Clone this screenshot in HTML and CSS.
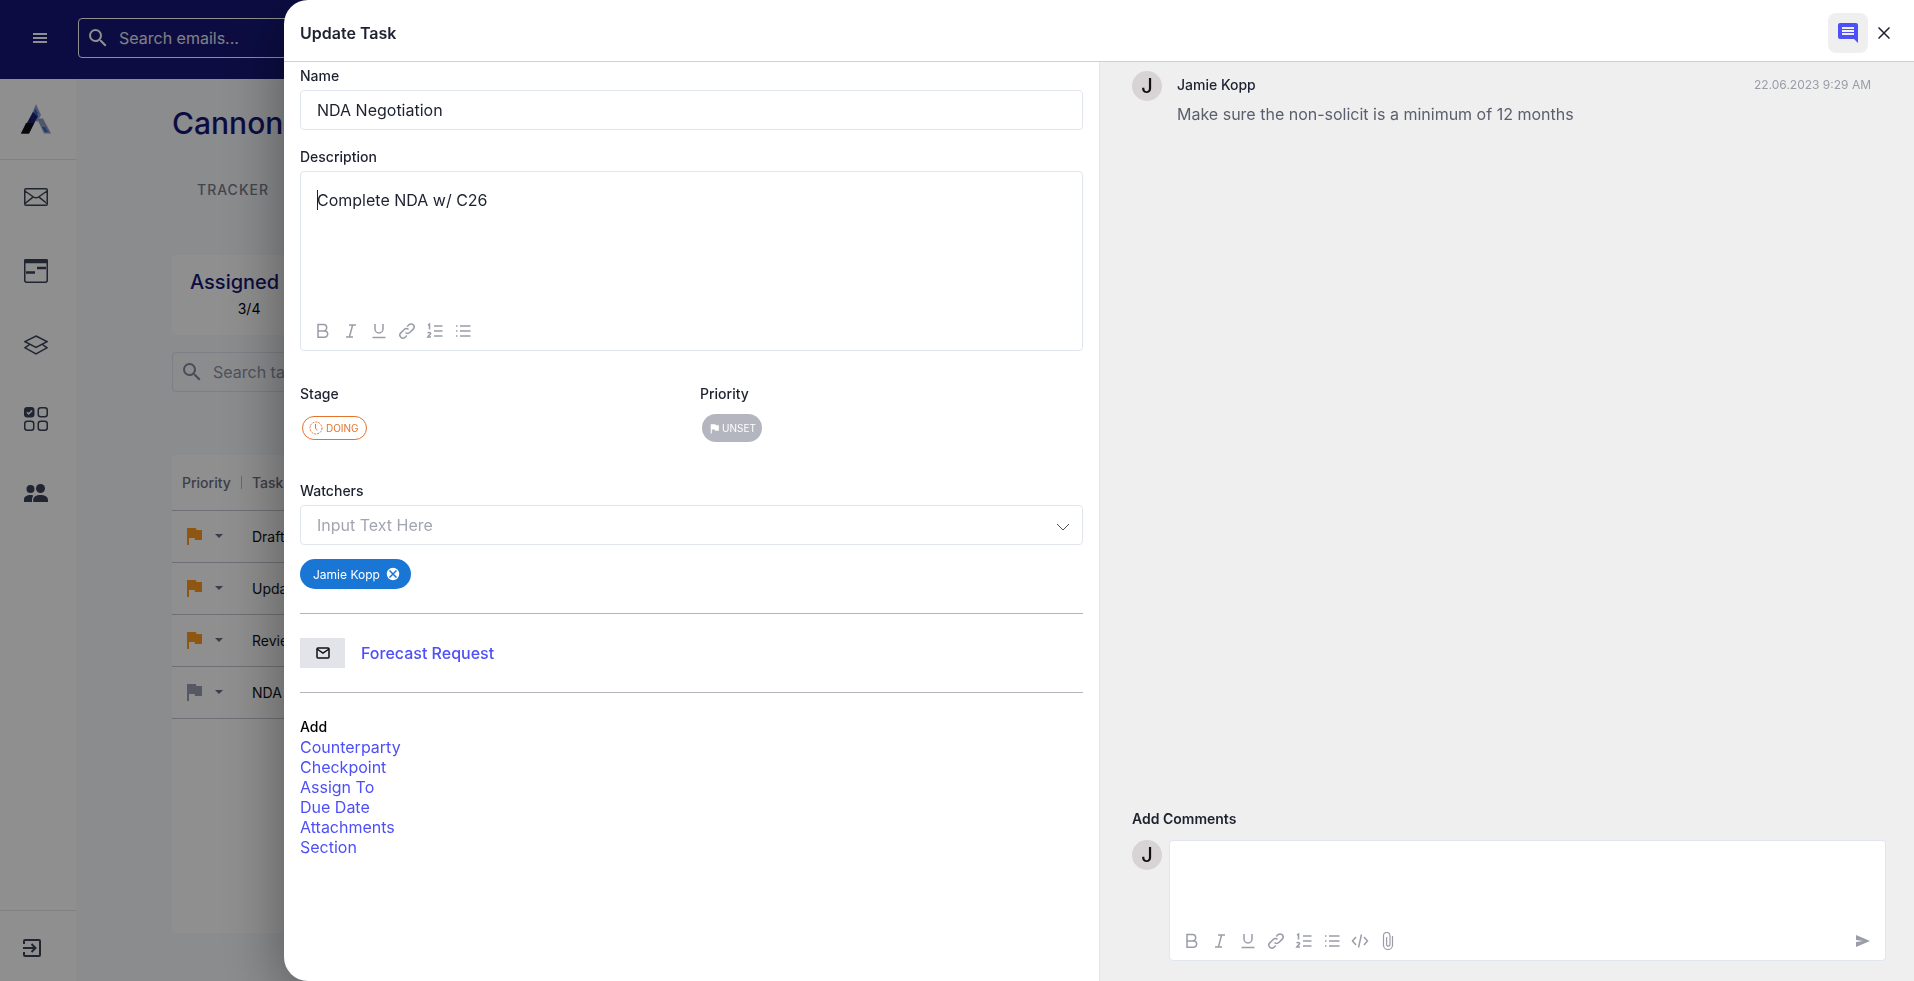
FILE: index.html
```
<!DOCTYPE html>
<html lang="en">
<head>
  <meta charset="UTF-8" />
  <meta name="viewport" content="width=device-width, initial-scale=1.0" />
  <title>Update Task</title>
  <link rel="stylesheet" href="styles.css">
</head>
<body>
<!-- Shared icons -->
<svg class="sprite" aria-hidden="true">
  <symbol id="i-bold" viewBox="0 0 18 18"><path d="M4 2.500h5.500a3.200 3.200 0 0 1 0 6.400H4zM4 8.900h6.500a3.200 3.200 0 0 1 0 6.400H4z"/></symbol>
  <symbol id="i-italic" viewBox="0 0 18 18"><path d="M7 3h7M4 15h7M10.600 3l-3.200 12"/></symbol>
  <symbol id="i-underline" viewBox="0 0 18 18"><path d="M5 2v5a4 4 0 0 0 8 0V2M2.500 15.500h13"/></symbol>
  <symbol id="i-link" viewBox="0 0 18 18"><path d="M7.500 10.500a3 3 0 0 0 4.300 0l3.400-3.400a3 3 0 0 0-4.300-4.300L9.200 4.500M10.500 7.500a3 3 0 0 0-4.300 0l-3.400 3.400a3 3 0 0 0 4.300 4.300l1.700-1.700"/></symbol>
  <symbol id="i-ol" viewBox="0 0 18 18"><path d="M8 4h8.500M8 9h8.500M8 14h8.500M2 3.200l1.500-1V7.500M1.800 11.300c.4-1.200 3-1.100 2.800.3-.1.900-1.600 1.600-2.800 3.400H5"/></symbol>
  <symbol id="i-ul" viewBox="0 0 18 18"><path d="M6 4h10.500M6 9h10.500M6 14h10.500M2 4h1.500M2 9h1.500M2 14h1.500"/></symbol>
  <symbol id="i-code" viewBox="0 0 18 18"><path d="M5 5L1.500 9 5 13M13 5l3.500 4-3.500 4M10.500 2.500l-3 13"/></symbol>
  <symbol id="i-clip" viewBox="0 0 18 18"><path stroke-width="1.200" d="M13.500 4v9a4.500 4.500 0 0 1-9 0V3.700a3 3 0 0 1 6.500 0V12.500a1.700 1.700 0 0 1-3.400 0V5"/></symbol>
  <symbol id="i-search" viewBox="0 0 24 24"><path fill="currentColor" d="M15.500 14h-.79l-.28-.27A6.470 6.470 0 0 0 16 9.500 6.500 6.500 0 1 0 9.500 16c1.610 0 3.090-.59 4.230-1.570l.27.28v.79l5 4.990L20.490 19l-4.990-5zm-6 0C7.010 14 5 11.990 5 9.500S7.010 5 9.500 5 14 7.010 14 9.500 11.990 14 9.500 14z"/></symbol>
  <symbol id="i-flag" viewBox="0 0 24 24"><path fill="currentColor" d="M14.400 6L14 4H5v17h2v-7h5.600l.4 2h7V6z"/></symbol>
</svg>

<!-- App behind the drawer -->
<div class="app">
  <header class="topbar">
    <button class="menu-btn" aria-label="Menu">
      <svg width="14" height="12" viewBox="0 0 14 12"><path fill="currentColor" d="M0 1h14v2H0zM0 5h14v2H0zM0 9h14v2H0z"/></svg>
    </button>
    <label class="search search-top">
      <svg width="24" height="24"><use href="#i-search"/></svg>
      <input type="text" placeholder="Search emails..." aria-label="Search emails" />
    </label>
  </header>

  <div class="shell">
    <nav class="sidebar">
      <a class="logo" href="#" aria-label="Home">
        <svg width="30" height="30" viewBox="0 0 30 30">
          <path fill="#8fa3cf" d="M15 0l5 11-4 7-6-6z"/>
          <path fill="#1c2170" d="M12 8l5 4-9 17.500H0z"/>
          <path fill="#101116" d="M5 19l8 0-5 10.500H0z"/>
          <path fill="#8d9cc0" d="M16 14.500h6L30 29.500h-7z"/>
          <path fill="#3b63c4" d="M14 4l3 5-1 3-3-3zM21 23h3l3 5h-3z"/>
        </svg>
      </a>
      <div class="nav-links">
        <a href="#" aria-label="Emails"><svg width="24" height="18" viewBox="0 0 24 18"><path d="M2 .75h20a1.300 1.300 0 0 1 1.250 1.300v13.900a1.300 1.300 0 0 1-1.250 1.300H2a1.300 1.300 0 0 1-1.250-1.300V2.050A1.300 1.300 0 0 1 2 .75zM1 3l8.500 6q2.500 1.700 5 0L23 3M1 15.500l8.300-6.600M23 15.500l-8.300-6.600"/></svg></a>
        <a href="#" aria-label="Timeline"><svg width="24" height="24" viewBox="0 0 24 24"><rect x=".75" y=".75" width="22.500" height="22.500" rx="2"/><path fill="currentColor" d="M1 1h22v2.500H1z"/><path stroke-width="2.500" d="M2 13.500h9M13 9h9"/></svg></a>
        <a href="#" aria-label="Layers"><svg width="24" height="20" viewBox="0 0 24 20"><path d="M12 1l11 5.700-11 5.700L1 6.700zM5.500 9.500L1 12.800l11 6 11-6-4.500-3.300"/></svg></a>
        <a href="#" aria-label="Tasks"><svg width="24" height="24" viewBox="0 0 24 24"><rect x=".75" y=".75" width="9" height="9" rx="2.500" fill="currentColor"/><rect x="14.250" y=".75" width="9" height="9" rx="2.500"/><rect x=".75" y="14.250" width="9" height="9" rx="2.500"/><rect x="14.250" y="14.250" width="9" height="9" rx="2.500"/><path stroke="#fff" d="M3 5.200l1.700 1.700L8 3.500"/></svg></a>
        <a href="#" aria-label="People"><svg width="24" height="18" viewBox="0 0 24 18"><g fill="currentColor" stroke="none"><circle cx="6.500" cy="5" r="4"/><circle cx="16.500" cy="4.500" r="4.500"/><path d="M0 18v-2.500C0 12.500 3 11 6.500 11c1.500 0 2.500.3 3 .6C8.500 13 8 14 8 18zM9.200 18v-2c0-3.500 3.200-5 7.300-5s7.500 1.500 7.500 5v2z"/></g></svg></a>
      </div>
      <a class="logout" href="#" aria-label="Log out"><svg width="18" height="18" viewBox="0 0 18 18"><path stroke-width="2" d="M1 5V2a1 1 0 0 1 1-1h14a1 1 0 0 1 1 1v14a1 1 0 0 1-1 1H2a1 1 0 0 1-1-1v-3M0 9h12M8.500 5l4 4-4 4"/></svg></a>
    </nav>

    <main class="content">
      <h1>Cannon</h1>
      <a class="tab" href="#">TRACKER</a>
      <section class="count-card">
        <h2>Assigned To</h2>
        <p>3/4</p>
      </section>
      <label class="search search-tasks">
        <svg width="24" height="24"><use href="#i-search"/></svg>
        <input type="text" placeholder="Search tasks..." aria-label="Search tasks" />
      </label>
      <section class="table-card">
        <table>
          <thead>
            <tr><th class="col-priority">Priority</th><th>Task</th></tr>
          </thead>
          <tbody>
            <tr><td><button class="flag-btn high" aria-label="Priority"><svg width="24" height="24"><use href="#i-flag"/></svg><span class="caret-down"></span></button></td><td>Draft</td></tr>
            <tr><td><button class="flag-btn high" aria-label="Priority"><svg width="24" height="24"><use href="#i-flag"/></svg><span class="caret-down"></span></button></td><td>Update</td></tr>
            <tr><td><button class="flag-btn high" aria-label="Priority"><svg width="24" height="24"><use href="#i-flag"/></svg><span class="caret-down"></span></button></td><td>Review</td></tr>
            <tr><td><button class="flag-btn" aria-label="Priority"><svg width="24" height="24"><use href="#i-flag"/></svg><span class="caret-down"></span></button></td><td>NDA</td></tr>
          </tbody>
        </table>
      </section>
    </main>
  </div>
</div>

<!-- Drawer -->
<div class="backdrop">
  <section class="drawer" role="dialog" aria-labelledby="drawer-title">
    <header class="drawer-header">
      <h2 id="drawer-title">Update Task</h2>
      <button class="comments-btn" aria-label="Comments">
        <svg width="20" height="20" viewBox="0 0 20 20"><path fill="#4f4ff7" d="M2 0h16a2 2 0 0 1 2 2v18l-4-4H2a2 2 0 0 1-2-2V2a2 2 0 0 1 2-2z"/><path fill="#efefef" d="M4 4h12v2H4zM4 7h12v2H4zM4 10h12v2H4z"/></svg>
      </button>
      <button class="close-btn" aria-label="Close">
        <svg width="12" height="12" viewBox="0 0 12 12"><path d="M.5.5l11 11M11.500.5l-11 11"/></svg>
      </button>
    </header>

    <div class="drawer-body">
      <form class="task-form">
        <label class="field-label" for="name">Name</label>
        <input class="text-input" id="name" type="text" value="NDA Negotiation" />

        <label class="field-label label-description" for="description">Description</label>
        <div class="editor">
          <div class="editor-text">
            <span class="text-cursor"></span>
            <textarea id="description">Complete NDA w/ C26</textarea>
          </div>
          <div class="toolbar">
            <button type="button" aria-label="Bold"><svg><use href="#i-bold"/></svg></button>
            <button type="button" aria-label="Italic"><svg><use href="#i-italic"/></svg></button>
            <button type="button" aria-label="Underline"><svg><use href="#i-underline"/></svg></button>
            <button type="button" aria-label="Link"><svg><use href="#i-link"/></svg></button>
            <button type="button" aria-label="Numbered list"><svg><use href="#i-ol"/></svg></button>
            <button type="button" aria-label="Bulleted list"><svg><use href="#i-ul"/></svg></button>
          </div>
        </div>

        <div class="status-row">
          <div class="status">
            <span class="field-label" id="stage-label">Stage</span>
            <button type="button" class="pill pill-doing" aria-describedby="stage-label">
              <svg width="14" height="14" viewBox="0 0 14 14"><circle cx="7" cy="7" r="6" stroke-dasharray="2 1"/><path d="M6.500 3v4.500l2 1.500"/></svg>
              DOING
            </button>
          </div>
          <div class="status">
            <span class="field-label" id="priority-label">Priority</span>
            <button type="button" class="pill pill-unset" aria-describedby="priority-label">
              <svg width="13" height="13"><use href="#i-flag"/></svg>
              UNSET
            </button>
          </div>
        </div>

        <label class="field-label label-watchers" for="watchers">Watchers</label>
        <div class="select-box">
          <input class="text-input" id="watchers" type="text" placeholder="Input Text Here" />
          <button type="button" aria-label="Open list"><svg width="14" height="8" viewBox="0 0 14 8"><path d="M1 1l6 6 6-6"/></svg></button>
        </div>
        <div class="chip">
          Jamie Kopp
          <button type="button" aria-label="Remove Jamie Kopp"><svg width="14" height="14" viewBox="0 0 14 14"><circle cx="7" cy="7" r="7" fill="#fff"/><path d="M3.500 3.500l7 7M10.500 3.500l-7 7"/></svg></button>
        </div>

        <div class="linked-email">
          <span class="email-icon"><svg width="14" height="12" viewBox="0 0 14 12"><rect x="1" y="1" width="12" height="10" rx="1"/><path d="M1 2l6 4 6-4"/></svg></span>
          <a href="#">Forecast Request</a>
        </div>

        <div class="add-links">
          <h3>Add</h3>
          <a href="#">Counterparty</a>
          <a href="#">Checkpoint</a>
          <a href="#">Assign To</a>
          <a href="#">Due Date</a>
          <a href="#">Attachments</a>
          <a href="#">Section</a>
        </div>
      </form>

      <aside class="comments">
        <article class="comment">
          <span class="avatar">J</span>
          <div class="comment-main">
            <div class="comment-head">
              <h3>Jamie Kopp</h3>
              <time datetime="2023-06-22T09:29">22.06.2023 9:29 AM</time>
            </div>
            <p>Make sure the non-solicit is a minimum of 12 months</p>
          </div>
        </article>

        <form class="new-comment">
          <label class="comment-label" for="comment">Add Comments</label>
          <div class="comment-row">
            <span class="avatar">J</span>
            <div class="editor">
              <div class="editor-text"><textarea id="comment"></textarea></div>
              <div class="toolbar">
                <button type="button" aria-label="Bold"><svg><use href="#i-bold"/></svg></button>
                <button type="button" aria-label="Italic"><svg><use href="#i-italic"/></svg></button>
                <button type="button" aria-label="Underline"><svg><use href="#i-underline"/></svg></button>
                <button type="button" aria-label="Link"><svg><use href="#i-link"/></svg></button>
                <button type="button" aria-label="Numbered list"><svg><use href="#i-ol"/></svg></button>
                <button type="button" aria-label="Bulleted list"><svg><use href="#i-ul"/></svg></button>
                <button type="button" aria-label="Code"><svg><use href="#i-code"/></svg></button>
                <button type="button" aria-label="Attach file"><svg><use href="#i-clip"/></svg></button>
                <button type="submit" class="send" aria-label="Send"><svg viewBox="0 0 18 18"><path d="M2 3l14 6-14 6v-5l7-1-7-1z"/></svg></button>
              </div>
            </div>
          </div>
        </form>
      </aside>
    </div>
  </section>
</div>
</body>
</html>
```
FILE: styles.css
```
/* Global Styles */
* {
  box-sizing: border-box;
}
body {
  margin: 0;
  font-family: Inter, sans-serif;
  font-size: 16px;
  color: #1e2130;
  overflow: hidden;
}
h1, h2, h3, p {
  margin: 0;
}
a {
  color: #4f4ff7;
  text-decoration: none;
}
button {
  font-family: inherit;
  background: none;
  border: none;
  padding: 0;
  cursor: pointer;
}
input,
textarea {
  font-family: inherit;
  font-size: 16px;
  color: #1e2130;
  background: none;
  border: none;
  outline: none;
  padding: 0;
}
svg {
  display: block;
  fill: none;
  stroke-width: 1.5;
}
.sprite {
  position: absolute;
  width: 0;
  height: 0;
}

/* App */
.app {
  display: flex;
  flex-direction: column;
  height: 100vh;
}
.topbar {
  display: flex;
  align-items: center;
  gap: 31px;
  height: 79px;
  padding: 0 33px 3px;
  background: #161776;
}
.menu-btn {
  color: #fff;
}
.search {
  display: flex;
  align-items: center;
  gap: 9px;
  height: 40px;
  padding: 0 7px;
  border: 1px solid #dfe3ee;
  border-radius: 4px;
}
.search-top {
  width: 480px;
  border-color: #fff;
  color: #fff;
}
.search-top input::placeholder {
  color: #e4e4ea;
  opacity: 1;
}
.shell {
  flex: 1;
  display: flex;
  min-height: 0;
}

/* Sidebar */
.sidebar {
  display: flex;
  flex-direction: column;
  width: 76px;
  background: #fff;
}
.sidebar a {
  color: #3c4058;
}
.sidebar svg {
  stroke: currentColor;
}
.sidebar .logo svg {
  stroke: none;
}
.logo {
  padding: 25px 21px;
  border-bottom: 1px solid #e4e4e4;
}
.nav-links {
  flex: 1;
}
.nav-links a {
  display: flex;
  align-items: center;
  height: 74px;
  padding-left: 24px;
}
.logout {
  padding: 28px 23px 24px;
  border-top: 1px solid #e4e4e4;
}

/* Page content */
.content {
  flex: 1;
  display: flex;
  flex-direction: column;
  padding: 24px 48px 48px 96px;
  background: #f7f9fd;
}
.content h1 {
  font-size: 30px;
  line-height: 40px;
  font-weight: 500;
  color: #161776;
}
.tab {
  margin: 35px 0 0 25px;
  font-size: 14px;
  line-height: 24px;
  font-weight: 500;
  letter-spacing: 1px;
  color: #7a7c8c;
}
.count-card {
  align-self: flex-start;
  height: 80px;
  margin-top: 53px;
  padding: 13px 18px;
  border-radius: 4px;
  background: #fff;
  text-align: center;
}
.count-card h2 {
  font-size: 20px;
  line-height: 28px;
  font-weight: 500;
  color: #161776;
}
.count-card p {
  font-size: 14px;
  line-height: 26px;
  color: #000;
}
.search-tasks {
  margin-top: 17px;
  color: #7e88a0;
}
.search-tasks input::placeholder {
  color: #8d93a6;
  opacity: 1;
}
.table-card {
  flex: 1;
  margin-top: 63px;
  border-radius: 4px;
  background: #fff;
}
table {
  width: 100%;
  border-collapse: collapse;
  font-size: 14px;
}
th,
td {
  height: 52px;
  padding: 0 0 0 10px;
  border-bottom: 1px solid #c4c7d0;
  text-align: left;
}
th {
  height: 55px;
  font-weight: 500;
  color: #6b6e80;
}
.col-priority {
  width: 70px;
  background: linear-gradient(#b9bcc8, #b9bcc8) no-repeat right center / 1px 13px;
}
td {
  color: #111;
}
.flag-btn {
  display: flex;
  align-items: center;
  gap: 9px;
  color: #9a9eb2;
}
.flag-btn.high {
  color: #ff9a1f;
}
.caret-down {
  border: 4px solid transparent;
  border-top-color: #6b6e80;
  border-bottom: none;
}

/* Drawer */
.backdrop {
  position: fixed;
  inset: 0;
  padding-left: 284px;
  background: rgba(0, 0, 0, 0.44);
}
.drawer {
  display: flex;
  flex-direction: column;
  height: 100%;
  overflow: hidden;
  border-radius: 24px 0 0 24px;
  background: #fff;
  box-shadow: 0 16px 64px rgba(0, 0, 0, 0.4);
}
.drawer-header {
  display: flex;
  align-items: center;
  gap: 10px;
  height: 62px;
  padding: 4px 24px 0 16px;
  border-bottom: 1px solid #cfcfd4;
}
.drawer-header h2 {
  flex: 1;
  font-size: 16px;
  font-weight: 600;
}
.comments-btn {
  display: grid;
  place-items: center;
  width: 40px;
  height: 40px;
  border-radius: 8px;
  background: #efefef;
}
.close-btn svg {
  stroke: #1e2130;
}
.drawer-body {
  flex: 1;
  display: grid;
  grid-template-columns: 1fr 1fr;
  min-height: 0;
}

/* Task form */
.task-form {
  padding: 4px 16px 16px;
}
.field-label {
  display: block;
  font-size: 14px;
  line-height: 20px;
  font-weight: 500;
}
.text-input {
  display: block;
  width: 100%;
  height: 40px;
  margin-top: 4px;
  padding: 0 16px;
  border: 1px solid #e1e5ef;
  border-radius: 4px;
}
.text-input::placeholder {
  color: #a3a6b0;
  opacity: 1;
}
.label-description {
  margin-top: 17px;
}
.editor {
  display: flex;
  flex-direction: column;
  border: 1px solid #e1e5ef;
  border-radius: 4px;
  background: #fff;
}
.task-form .editor {
  height: 180px;
  margin-top: 4px;
}
.editor-text {
  flex: 1;
  position: relative;
  padding: 16px 16px 0;
}
.editor-text textarea {
  display: block;
  width: 100%;
  height: 100%;
  line-height: 24px;
  resize: none;
}
.text-cursor {
  position: absolute;
  left: 16px;
  top: 18px;
  width: 1px;
  height: 20px;
  background: #1e2130;
}
.toolbar {
  display: flex;
  gap: 10px;
  padding: 10px 13px;
}
.toolbar svg {
  width: 18px;
  height: 18px;
  stroke: #9a9da8;
}
.toolbar .send {
  margin-left: auto;
}
.send svg {
  fill: #9a9da8;
  stroke: none;
}
.status-row {
  display: grid;
  grid-template-columns: 400px 1fr;
  margin-top: 33px;
}
.status {
  height: 58px;
}
.pill {
  display: flex;
  align-items: center;
  font-size: 10px;
  border-radius: 14px;
}
.pill-doing {
  gap: 3px;
  height: 24px;
  margin: 12px 2px;
  padding: 0 7px 0 6px;
  border: 1px solid #e2732d;
  color: #e2732d;
}
.pill-doing svg {
  stroke: #e2732d;
  stroke-width: 1;
}
.pill-unset {
  gap: 1px;
  height: 28px;
  margin: 10px 2px;
  padding: 0 6px;
  background: #b3b6bf;
  color: #fff;
}
.label-watchers {
  margin-top: 39px;
}
.select-box {
  position: relative;
}
.select-box button {
  position: absolute;
  right: 13px;
  top: 18px;
}
.select-box svg {
  stroke: #4a4d5e;
  stroke-width: 1;
}
.chip {
  display: flex;
  align-items: center;
  gap: 6px;
  width: max-content;
  height: 30px;
  margin-top: 14px;
  padding: 0 11px 0 13px;
  border-radius: 15px;
  background: #1976d5;
  color: #fff;
  font-size: 12px;
}
.chip svg {
  stroke: #1976d5;
}
.linked-email {
  display: flex;
  align-items: center;
  gap: 16px;
  height: 80px;
  margin-top: 24px;
  border-top: 1px solid #b3b5bd;
  border-bottom: 1px solid #b3b5bd;
  font-weight: 500;
}
.email-icon {
  display: grid;
  place-items: center;
  width: 45px;
  height: 30px;
  background: #e2e4e9;
}
.email-icon svg {
  stroke: #111;
}
.add-links {
  display: flex;
  flex-direction: column;
  align-items: flex-start;
  margin-top: 24px;
  line-height: 20px;
}
.add-links h3 {
  font-size: 14px;
  font-weight: 500;
  color: #000;
}

/* Comments */
.comments {
  display: flex;
  flex-direction: column;
  justify-content: space-between;
  padding: 9px 28px 20px 32px;
  border-left: 1px solid #e1e5ef;
  background: #efefef;
}
.comment {
  display: flex;
  gap: 15px;
}
.avatar {
  display: grid;
  place-items: center;
  flex: none;
  width: 30px;
  height: 30px;
  border-radius: 50%;
  background: #d8d4d5;
  font-size: 20px;
  font-weight: 500;
  color: #111;
}
.comment-main {
  flex: 1;
}
.comment-head {
  display: flex;
  justify-content: space-between;
  padding: 4px 15px 0 0;
  line-height: 20px;
}
.comment-head h3 {
  font-size: 14px;
  font-weight: 500;
}
.comment-head time {
  font-size: 12px;
  color: #9a9da8;
}
.comment p {
  margin-top: 7px;
  line-height: 24px;
  color: #5b5e6c;
}
.comment-label {
  display: block;
  font-size: 14px;
  line-height: 20px;
  font-weight: 600;
}
.comment-row {
  display: flex;
  gap: 7px;
  margin-top: 11px;
}
.comment-row .editor {
  flex: 1;
  height: 121px;
}
```
